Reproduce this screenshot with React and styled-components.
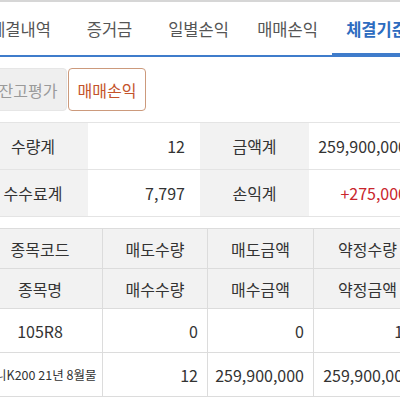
import React from 'react'
import styled, { createGlobalStyle } from 'styled-components'

const GlobalStyle = createGlobalStyle`
  html, body {
    margin: 0;
    padding: 0;
    background: #fff;
    overflow: hidden;
  }
  body {
    font-family: "Noto Sans CJK KR", "Noto Sans", sans-serif;
    color: #333;
  }
`

const Page = styled.div`
  width: 444px;
  margin-left: -22px;
  border-top: 2px solid #d6d6d6;
`

const TabBar = styled.nav`
  display: flex;
  margin-left: -2px;
  border-bottom: 2px solid #3f7ccb;
`

const Tab = styled.div`
  flex: 0 0 89px;
  height: 53px;
  display: flex;
  align-items: center;
  justify-content: center;
  white-space: nowrap;
  font-size: 16.5px;
  font-weight: ${p => (p.$active ? 700 : 400)};
  color: ${p => (p.$active ? '#2d6cc0' : '#555')};
  box-shadow: ${p => (p.$active ? 'inset 0 -2px 0 #3f7ccb' : 'none')};
`

const ButtonRow = styled.div`
  display: flex;
  gap: 1px;
  margin: 11px 0 0 11px;
`

const ToggleButton = styled.div`
  box-sizing: border-box;
  width: 78px;
  height: 43px;
  display: flex;
  align-items: center;
  justify-content: center;
  font-size: 16px;
  border-radius: 4px;
  background: ${p => (p.$selected ? '#fff' : '#efefef')};
  border: 1px solid ${p => (p.$selected ? '#cc9a7c' : '#e6e6e6')};
  color: ${p => (p.$selected ? '#c4532a' : '#9a9a9a')};
`

const Summary = styled.div`
  display: grid;
  grid-template-columns: 110px 112px 109px 113px;
  margin-top: 11px;
  border-top: 1px solid #e4e4e4;
`

const SumCell = styled.div`
  height: 46px;
  display: flex;
  align-items: center;
  justify-content: ${p => (p.$label ? 'center' : 'flex-end')};
  padding-right: ${p => (p.$label ? '0' : '15px')};
  background: ${p => (p.$label ? '#f2f2f2' : '#fff')};
  border-bottom: 1px solid #e4e4e4;
  font-size: 16px;
  white-space: nowrap;
  color: ${p => (p.$red ? '#c9252c' : '#333')};
  overflow: hidden;
`

const Detail = styled.div`
  display: grid;
  grid-template-columns: 125px 105px 106px 108px;
  margin-top: 11px;
  border-top: 1px solid #dcdcdc;
`

const DCell = styled.div`
  height: ${p => (p.$head ? '39px' : '43px')};
  display: flex;
  align-items: center;
  justify-content: ${p => (p.$num ? 'flex-end' : 'center')};
  padding-right: ${p => (p.$num ? '9px' : '0')};
  background: ${p => (p.$head ? '#f2f2f2' : '#fff')};
  border-bottom: 1px solid #dcdcdc;
  border-right: 1px solid #dcdcdc;
  font-size: ${p => (p.$small ? '12.5px' : '16px')};
  white-space: nowrap;
  overflow: visible;
  color: #333;
`

const tabs = ['체결내역', '증거금', '일별손익', '매매손익', '체결기준']

const App = () => {
  return (
    <>
      <GlobalStyle />
      <Page>
        <TabBar>
          {tabs.map((t, i) => (
            <Tab key={t} $active={i === 4}>{t}</Tab>
          ))}
        </TabBar>
        <ButtonRow>
          <ToggleButton>잔고평가</ToggleButton>
          <ToggleButton $selected>매매손익</ToggleButton>
        </ButtonRow>
        <Summary>
          <SumCell $label>수량계</SumCell>
          <SumCell>12</SumCell>
          <SumCell $label>금액계</SumCell>
          <SumCell>259,900,000</SumCell>
          <SumCell $label>수수료계</SumCell>
          <SumCell>7,797</SumCell>
          <SumCell $label>손익계</SumCell>
          <SumCell $red>+275,000</SumCell>
        </Summary>
        <Detail>
          <DCell $head>종목코드</DCell>
          <DCell $head>매도수량</DCell>
          <DCell $head>매도금액</DCell>
          <DCell $head>약정수량</DCell>
          <DCell $head>종목명</DCell>
          <DCell $head>매수수량</DCell>
          <DCell $head>매수금액</DCell>
          <DCell $head>약정금액</DCell>
          <DCell>105R8</DCell>
          <DCell $num>0</DCell>
          <DCell $num>0</DCell>
          <DCell $num>12</DCell>
          <DCell $small>미니K200 21년 8월물</DCell>
          <DCell $num>12</DCell>
          <DCell $num>259,900,000</DCell>
          <DCell $num>259,900,000</DCell>
        </Detail>
      </Page>
    </>
  )
}

export default App
